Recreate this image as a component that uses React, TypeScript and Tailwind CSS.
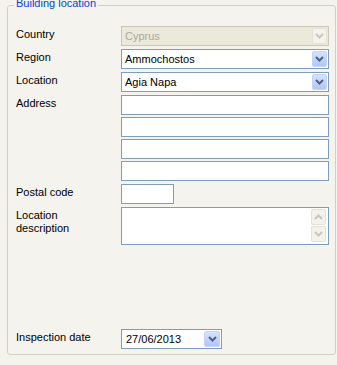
import React from 'react';

const Chevron = ({ up = false, color = '#4d6185' }: { up?: boolean; color?: string }) => (
  <svg width="9" height="6" viewBox="0 0 9 6" className={up ? 'rotate-180' : ''}>
    <polyline points="1,1 4.5,4.5 8,1" fill="none" stroke={color} strokeWidth="2" />
  </svg>
);

const DropButton = ({ disabled = false, w = 'w-[15px]' }: { disabled?: boolean; w?: string }) => (
  <div
    className={
      disabled
        ? `${w} h-[16px] mr-[1px] flex items-center justify-center rounded-[2px] border border-[#e4e2d6] bg-[#f3f2ec]`
        : `${w} h-[16px] mr-[1px] flex items-center justify-center rounded-[2px] border border-[#c3d3fb] bg-gradient-to-b from-[#d6e2fd] to-[#b2c6f5]`
    }
  >
    <Chevron color={disabled ? '#c9c7ba' : '#4d6185'} />
  </div>
);

const Combo = ({ value, disabled = false }: { value: string; disabled?: boolean }) => (
  <div
    className={
      disabled
        ? 'flex items-center h-[20px] w-[208px] border border-[#c9c7ba] bg-[#ebe9da]'
        : 'flex items-center h-[20px] w-[208px] border border-[#7f9db9] bg-white'
    }
  >
    <span className={disabled ? 'flex-1 pl-[3px] text-[#aca899]' : 'flex-1 pl-[3px] text-black'}>{value}</span>
    <DropButton disabled={disabled} />
  </div>
);

const TextBox = ({ w = 'w-[208px]' }: { w?: string }) => (
  <div className={`${w} h-[20px] border border-[#7f9db9] bg-white`} />
);

const Row = ({ label, children, className = '' }: { label: React.ReactNode; children: React.ReactNode; className?: string }) => (
  <div className={`flex ${className}`}>
    <div className="w-[105px] pt-[2px] leading-[13px] text-black">{label}</div>
    <div>{children}</div>
  </div>
);

export default function App() {
  return (
    <div className="relative w-[337px] h-[365px] bg-[#f4f3ee] pt-[5px] pl-[7px] font-['Liberation_Sans',Arial,sans-serif] text-[11px] leading-[13px]">
      <span className="absolute left-[14px] top-[-3px] px-[2px] bg-[#f4f3ee] text-[#0046d5]">Building location</span>
      <div className="w-[329px] h-[350px] border border-[#d0d0bf] rounded-[3px] pt-[20px] pl-[8px]">
        <div className="flex flex-col">
          <Row label="Country">
            <Combo value="Cyprus" disabled />
          </Row>
          <Row label="Region" className="mt-[3px]">
            <Combo value="Ammochostos" />
          </Row>
          <Row label="Location" className="mt-[3px]">
            <Combo value="Agia Napa" />
          </Row>
          <Row label="Address" className="mt-[3px]">
            <div className="flex flex-col gap-[2px]">
              <TextBox />
              <TextBox />
              <TextBox />
              <TextBox />
            </div>
          </Row>
          <Row label="Postal code" className="mt-[3px]">
            <TextBox w="w-[53px]" />
          </Row>
          <Row label={<>Location<br />description</>} className="mt-[3px]">
            <div className="flex w-[208px] h-[38px] border border-[#7f9db9] bg-white">
              <div className="flex-1" />
              <div className="flex flex-col w-[17px] pt-[1px]">
                <div className="w-[15px] h-[16px] flex items-center justify-center rounded-[2px] border border-[#e4e2d6] bg-[#f3f2ec]">
                  <Chevron up color="#c9c7ba" />
                </div>
                <div className="mt-[1px] w-[15px] h-[16px] flex items-center justify-center rounded-[2px] border border-[#e4e2d6] bg-[#f3f2ec]">
                  <Chevron color="#c9c7ba" />
                </div>
              </div>
            </div>
          </Row>
          <Row label="Inspection date" className="mt-[84px]">
            <div className="flex items-center h-[20px] w-[101px] border border-[#7f9db9] bg-white">
              <span className="flex-1 pl-[4px] text-black">27/06/2013</span>
              <DropButton w="w-[16px]" />
            </div>
          </Row>
        </div>
      </div>
    </div>
  );
}
